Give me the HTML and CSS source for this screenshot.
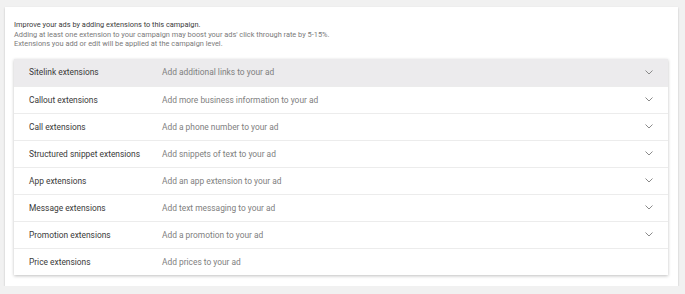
FILE: index.html
```html
<!DOCTYPE html>
<html lang="en">
<head>
  <meta charset="UTF-8">
  <title>Ad extensions</title>
  <link rel="stylesheet" href="styles.css">
</head>
<body>
  <div class="panel">
    <div class="intro">
      <p class="lead">Improve your ads by adding extensions to this campaign.</p>
      <p>Adding at least one extension to your campaign may boost your ads' click through rate by 5-15%.</p>
      <p>Extensions you add or edit will be applied at the campaign level.</p>
    </div>

    <div class="ext-list">
      <div class="ext-row active">
        <span class="ext-name">Sitelink extensions</span>
        <span class="ext-desc">Add additional links to your ad</span>
        <svg class="chev" viewBox="0 0 8 5"><path d="M0.5 0.5 L4 4 L7.5 0.5"/></svg>
      </div>
      <div class="ext-row">
        <span class="ext-name">Callout extensions</span>
        <span class="ext-desc">Add more business information to your ad</span>
        <svg class="chev" viewBox="0 0 8 5"><path d="M0.5 0.5 L4 4 L7.5 0.5"/></svg>
      </div>
      <div class="ext-row">
        <span class="ext-name">Call extensions</span>
        <span class="ext-desc">Add a phone number to your ad</span>
        <svg class="chev" viewBox="0 0 8 5"><path d="M0.5 0.5 L4 4 L7.5 0.5"/></svg>
      </div>
      <div class="ext-row">
        <span class="ext-name">Structured snippet extensions</span>
        <span class="ext-desc">Add snippets of text to your ad</span>
        <svg class="chev" viewBox="0 0 8 5"><path d="M0.5 0.5 L4 4 L7.5 0.5"/></svg>
      </div>
      <div class="ext-row">
        <span class="ext-name">App extensions</span>
        <span class="ext-desc">Add an app extension to your ad</span>
        <svg class="chev" viewBox="0 0 8 5"><path d="M0.5 0.5 L4 4 L7.5 0.5"/></svg>
      </div>
      <div class="ext-row">
        <span class="ext-name">Message extensions</span>
        <span class="ext-desc">Add text messaging to your ad</span>
        <svg class="chev" viewBox="0 0 8 5"><path d="M0.5 0.5 L4 4 L7.5 0.5"/></svg>
      </div>
      <div class="ext-row">
        <span class="ext-name">Promotion extensions</span>
        <span class="ext-desc">Add a promotion to your ad</span>
        <svg class="chev" viewBox="0 0 8 5"><path d="M0.5 0.5 L4 4 L7.5 0.5"/></svg>
      </div>
      <div class="ext-row">
        <span class="ext-name">Price extensions</span>
        <span class="ext-desc">Add prices to your ad</span>
      </div>
    </div>
  </div>
</body>
</html>
```

FILE: styles.css
```css
* {
  margin: 0;
  padding: 0;
  box-sizing: border-box;
}

body {
  font-family: Roboto, "Liberation Sans", sans-serif;
  background: #f1f1f1;
  color: #333;
  padding: 7px 7px 0 5px;
}

.panel {
  background: #fff;
  width: 673px;
  height: 279px;
  box-shadow: 0 1px 2px rgba(0, 0, 0, 0.2);
  padding: 13px 10px 0 9px;
}

/* Intro text */
.intro {
  font-size: 7.4px;
  line-height: 9.5px;
  color: #7a7a7a;
  margin-bottom: 10px;
}

.intro .lead {
  color: #3a3a3a;
}

/* Extension list */
.ext-list {
  background: #fff;
  box-shadow: 0 1px 3px rgba(0, 0, 0, 0.25);
}

.ext-row {
  display: flex;
  align-items: center;
  height: 27px;
  padding: 0 15px 0 15px;
  border-top: 1px solid #ececec;
  font-size: 8.4px;
}

.ext-row:first-child {
  border-top: none;
}

.ext-row.active {
  background: #ecebed;
}

.ext-name {
  width: 133px;
  color: #3a3a3a;
}

.ext-desc {
  flex: 1;
  color: #808080;
}

.chev {
  width: 8px;
  height: 5px;
  fill: none;
  stroke: #8a8a8a;
  stroke-width: 1;
}
```
